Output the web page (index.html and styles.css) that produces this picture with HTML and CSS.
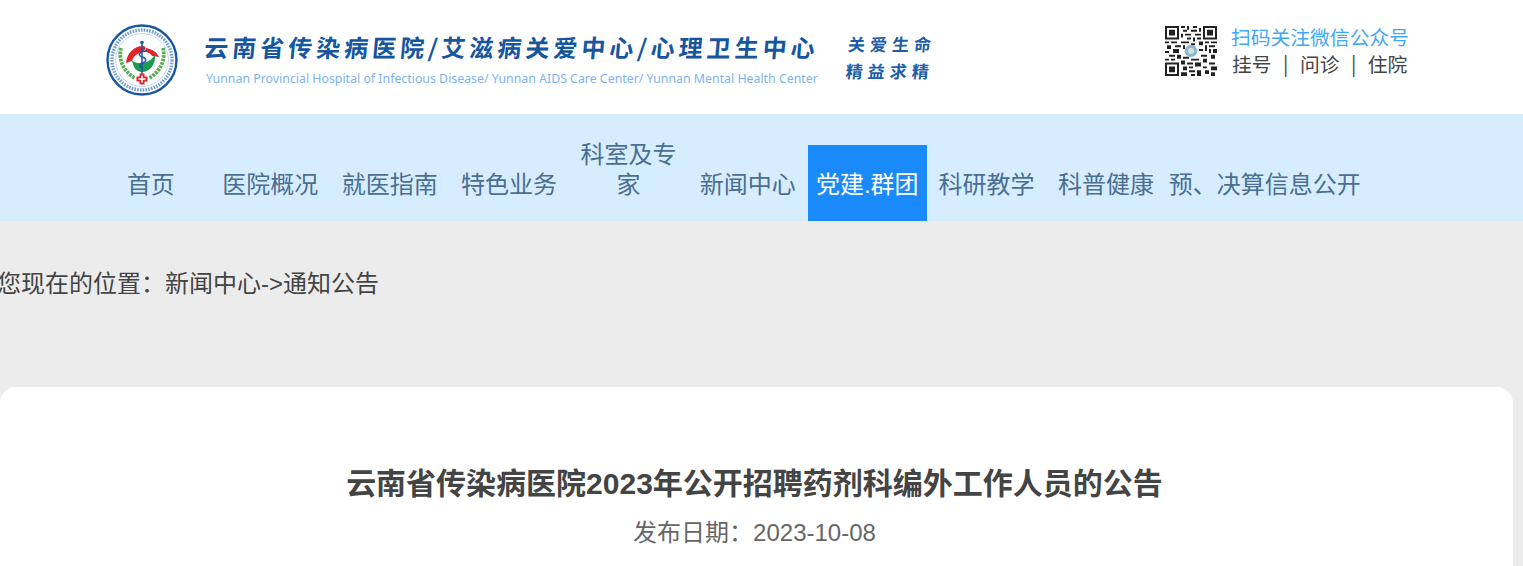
FILE: index.html
```html
<!DOCTYPE html>
<html lang="zh-CN">
<head>
<meta charset="utf-8">
<title>云南省传染病医院</title>
<link rel="stylesheet" href="styles.css">
</head>
<body>
<header class="top">
  <div class="brand">
    <svg class="logo" viewBox="0 0 72 72" width="72" height="72" aria-hidden="true">
      <circle cx="36" cy="36" r="34.5" fill="#fff" stroke="#1a56a6" stroke-width="2.4"/>
      <circle cx="36" cy="36" r="30" fill="none" stroke="#6f9cd2" stroke-width="3.4" stroke-dasharray="1.6 1.2"/>
      <circle cx="36" cy="36" r="26.5" fill="none" stroke="#7fa8d8" stroke-width=".5"/>
      <path d="M15 24 C12 36 18 48 29 54" stroke="#57ad50" stroke-width="3.8" stroke-dasharray="2.6 1" fill="none"/>
      <path d="M57 24 C60 36 54 48 43 54" stroke="#57ad50" stroke-width="3.8" stroke-dasharray="2.6 1" fill="none"/>
      <path d="M20 39 C21 28 29 22 37 22 C41 22 40 26 36 28 C30 30 27 33 26 37 Z" fill="#e0262c"/>
      <path d="M40 24 C46 25 51 28 53 33 L46 32 C44 29 42 28 39 28 Z" fill="#e0262c"/>
      <path d="M26 36 C30 41 42 41 49 31 C50 40 44 48 36 48 C30 48 27 43 26 36 Z" fill="#1c9a50"/>
      <path d="M36 18 V50" stroke="#1a56a6" stroke-width="1.500" fill="none"/>
      <circle cx="36" cy="18.500" r="1.800" fill="#1a56a6"/>
      <path d="M41 27 C32 27 32 32 36 33 C41 34 41 38 36 39 C33 40 33 43 36 44" stroke="#1a56a6" stroke-width="1.400" fill="none"/>
      <path d="M33.500 49.500h5v3h3v5h-3v3h-5v-3h-3v-5h3z" fill="#e0262c"/>
      <path d="M36 51.500 V58.500 M32.500 55 H39.500" stroke="#fff" stroke-width="1.600"/>
    </svg>
    <div class="names">
      <div class="name-cn">云南省传染病医院/艾滋病关爱中心/心理卫生中心</div>
      <div class="name-en">Yunnan Provincial Hospital of Infectious Disease/ Yunnan AIDS Care Center/ Yunnan Mental Health Center</div>
    </div>
    <div class="motto">
      <span>关爱生命</span>
      <span>精益求精</span>
    </div>
  </div>
  <div class="contact">
    <svg class="qr" viewBox="0 0 26 26" width="52" height="50" preserveAspectRatio="none" aria-hidden="true">
      <rect width="26" height="26" fill="#fff"/>
      <path fill="#222" d="M0 0h7v7H0zM19 0h7v7h-7zM0 19h7v7H0z"/>
      <path fill="#fff" d="M1 1h5v5H1zM20 1h5v5h-5zM1 20h5v5H1z"/>
      <path fill="#222" d="M2 2h3v3H2zM21 2h3v3h-3zM2 21h3v3H2z"/>
      <path fill="#222" d="M8 0h2v1H8zM11 0h1v2h-1zM14 0h2v1h-2zM17 1h1v2h-1zM9 2h2v1H9zM13 2h3v1h-3zM8 4h1v2H8zM10 4h3v1h-3zM15 4h3v1h-3zM11 6h2v1h-2zM14 6h1v2h-1zM16 6h2v1h-2zM0 8h2v1H0zM3 8h3v1H3zM8 8h4v1H8zM13 9h2v1h-2zM17 8h2v2h-2zM20 8h2v1h-2zM23 8h3v1h-3zM1 10h2v2H1zM5 10h3v1H5zM9 10h1v2H9zM20 10h1v3h-1zM22 10h3v1h-3zM0 13h2v1H0zM4 12h3v2H4zM17 12h2v1h-2zM22 12h1v2h-1zM24 12h2v2h-2zM2 15h3v1H2zM6 15h2v2H6zM9 16h3v1H9zM18 15h3v1h-3zM23 15h2v2h-2zM0 17h2v1H0zM3 17h2v1H3zM13 17h4v1h-4zM19 17h2v2h-2zM8 18h2v2H8zM11 19h3v1h-3zM15 19h3v2h-3zM22 19h3v1h-3zM9 21h2v2H9zM12 21h2v1h-2zM19 21h2v1h-2zM23 21h3v2h-3zM8 24h3v2H8zM12 23h3v1h-3zM16 23h2v3h-2zM20 23h2v2h-2zM13 25h2v1h-2zM23 24h2v2h-2z"/>
      <circle cx="13" cy="13" r="3.200" fill="#8fb6cf"/>
      <circle cx="13" cy="13" r="1.500" fill="#cfe3d6"/>
    </svg>
    <div class="contact-text">
      <div class="scan">扫码关注微信公众号</div>
      <div class="links"><span>挂号</span><i>|</i><span>问诊</span><i>|</i><span>住院</span></div>
    </div>
  </div>
</header>
<nav class="nav">
  <a class="nav-item" href="#">首页</a>
  <a class="nav-item" href="#">医院概况</a>
  <a class="nav-item" href="#">就医指南</a>
  <a class="nav-item" href="#">特色业务</a>
  <a class="nav-item" href="#">科室及专家</a>
  <a class="nav-item" href="#">新闻中心</a>
  <a class="nav-item active" href="#">党建.群团</a>
  <a class="nav-item" href="#">科研教学</a>
  <a class="nav-item" href="#">科普健康</a>
  <a class="nav-item wide" href="#">预、决算信息公开</a>
</nav>
<main class="main">
  <div class="crumb">您现在的位置：新闻中心-&gt;通知公告</div>
  <article class="card">
    <h1 class="title">云南省传染病医院2023年公开招聘药剂科编外工作人员的公告</h1>
    <div class="date">发布日期：2023-10-08</div>
  </article>
</main>
</body>
</html>
```
FILE: styles.css
```css
* { box-sizing: border-box; }
html, body { margin: 0; padding: 0; }
body {
  height: 566px;
  overflow: hidden;
  background: #ececec;
  color: #444;
  font-family: "Liberation Sans", "Noto Sans CJK SC", sans-serif;
}
.top {
  height: 114px;
  background: #fff;
  display: flex;
  justify-content: space-between;
  padding: 24px 114px 0 106px;
}
.brand { display: flex; align-items: flex-start; }
.logo { display: block; }
.names { margin-left: 25px; width: 641px; padding-top: 8px; }
.name-cn {
  font-family: "Noto Sans CJK SC", sans-serif;
  font-weight: 700;
  font-size: 24px;
  line-height: 30px;
  letter-spacing: 4px;
  color: #15569f;
  white-space: nowrap;
  transform: skewX(-5deg);
  transform-origin: left bottom;
}
.name-en {
  font-family: "Noto Sans", sans-serif;
  font-size: 12.350px;
  line-height: 16px;
  margin-top: 9px;
  margin-left: 3px;
  color: #7eb4ee;
  white-space: nowrap;
}
.motto {
  margin: 9px 0 0 3px;
  display: flex;
  flex-direction: column;
  gap: 5px;
  font-family: "Noto Sans CJK SC", sans-serif;
  font-weight: 700;
  font-size: 17px;
  line-height: 22px;
  letter-spacing: 5px;
  color: #1d5ea8;
  transform: skewX(-5deg);
}
.contact { display: flex; align-items: flex-start; margin-top: 1px; }
.qr { display: block; margin-top: 1px; }
.contact-text { margin-left: 14px; font-family: "Noto Sans CJK SC", sans-serif; font-size: 19.800px; }
.scan { line-height: 24px; color: #3fa9f5; }
.links { line-height: 30px; color: #444; display: flex; gap: 11.500px; padding-left: 1px; }
.links i { font-style: normal; }
.nav {
  height: 107px;
  background: #d6ecff;
  display: flex;
  align-items: flex-end;
  padding-left: 91.200px;
}
.nav-item {
  width: 119.400px;
  padding: 25px 8px 21px;
  font-size: 24px;
  line-height: 30px;
  text-align: center;
  color: #4a6f91;
  text-decoration: none;
}
.nav-item.wide { width: 198px; padding-left: 3px; padding-right: 3px; white-space: nowrap; }
.nav-item.active { background: #1a8afa; color: #fff; }
.main { padding-right: 10px; }
.crumb {
  height: 166px;
  padding: 39px 0 0 0;
  margin-left: -3px;
  font-size: 24px;
  line-height: 48px;
  color: #444;
}
.card {
  height: 179px;
  background: #fff;
  border-radius: 16px 16px 0 0;
  padding: 72px 4px 0 0;
  text-align: center;
}
.title {
  margin: 0;
  font-size: 30px;
  line-height: 50px;
  font-weight: 700;
  color: #444;
}
.date {
  font-size: 24px;
  line-height: 48px;
  color: #666;
}
```
